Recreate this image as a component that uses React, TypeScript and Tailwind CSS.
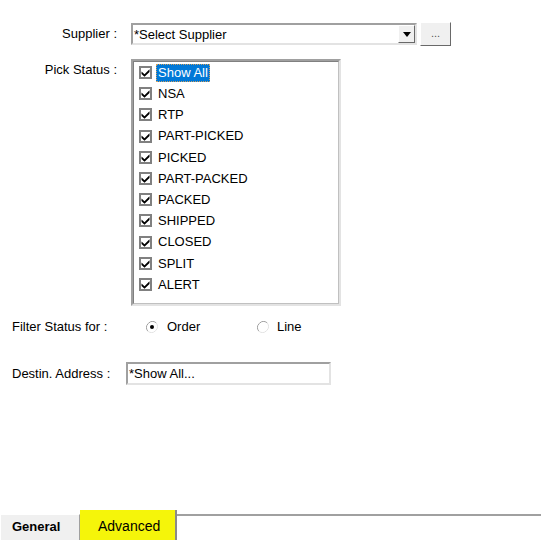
import React from "react";

const items = [
  "Show All",
  "NSA",
  "RTP",
  "PART-PICKED",
  "PICKED",
  "PART-PACKED",
  "PACKED",
  "SHIPPED",
  "CLOSED",
  "SPLIT",
  "ALERT",
];

function Check() {
  return (
    <div className="w-[13px] h-[13px] border-2 border-[#808080] bg-white flex items-center justify-center shrink-0">
      <svg width="9" height="9" viewBox="0 0 9 9">
        <path d="M0.5 3.5 L3.5 6.3 L8.5 1.2 L8.5 4 L3.5 8.8 L0.5 6 Z" fill="#000" />
      </svg>
    </div>
  );
}

function Radio({ on }: { on: boolean }) {
  return (
    <svg width="12" height="12" viewBox="0 0 12 12" className="shrink-0">
      <path d="M10.2 1.8 A6 6 0 0 0 1.8 10.2" fill="none" stroke="#a0a0a0" strokeWidth="1" />
      <path d="M1.8 10.2 A6 6 0 0 0 10.2 1.8" fill="none" stroke="#e3e3e3" strokeWidth="1" />
      <circle cx="6" cy="6" r="4.5" fill="#fff" />
      {on && <circle cx="6" cy="6" r="2" fill="#000" />}
    </svg>
  );
}

export default function App() {
  return (
    <div
      className="w-[541px] h-[540px] bg-white flex flex-col text-[13px] text-black overflow-hidden"
      style={{ fontFamily: '"Liberation Sans", Arial, sans-serif' }}
    >
      {/* Supplier */}
      <div className="flex items-center mt-[22px] h-[24px]">
        <div className="w-[117px] text-right">Supplier :</div>
        <div className="ml-[14px] w-[286px] h-[22px] border-2 border-t-[#a0a0a0] border-l-[#a0a0a0] border-b-[#e3e3e3] border-r-[#e3e3e3] bg-white flex items-center">
          <div className="flex-1 pl-[1px] leading-none">*Select Supplier</div>
          <div className="w-[17px] h-[18px] bg-[#f0f0f0] border border-t-white border-l-white border-b-[#696969] border-r-[#696969] flex items-center justify-center">
            <svg width="8" height="5" viewBox="0 0 8 5">
              <path d="M0 0 H8 L4 5 Z" fill="#000" />
            </svg>
          </div>
        </div>
        <div className="ml-[3px] w-[31px] h-[24px] bg-[#f0f0f0] border border-t-white border-l-white border-b-[#696969] border-r-[#696969] flex items-center justify-center text-[#555] text-[11px] leading-none pb-[2px]">
          ...
        </div>
      </div>

      {/* Pick Status */}
      <div className="flex mt-[13px]">
        <div className="w-[117px] text-right pt-[1px]">Pick Status :</div>
        <div className="ml-[14px] w-[210px] h-[247px] border-2 border-t-[#a0a0a0] border-l-[#a0a0a0] border-b-[#e3e3e3] border-r-[#e3e3e3] bg-white">
          <div className="border border-[#808080] border-b-[#c0c0c0] border-r-[#c0c0c0] h-full pl-[5px]">
            {items.map((it, i) => (
              <div key={it} className="flex items-center h-[21.2px]">
                <Check />
                {i === 0 ? (
                  <span className="ml-[4px] px-[2px] h-[18px] flex items-center bg-[#0078d7] text-white outline-1 outline-dotted outline-[#d0a060] -outline-offset-1">
                    {it}
                  </span>
                ) : (
                  <span className="ml-[6px]">{it}</span>
                )}
              </div>
            ))}
          </div>
        </div>
      </div>

      {/* Filter Status */}
      <div className="flex items-center mt-[13px] h-[16px]">
        <div className="ml-[12px] w-[134px]">Filter Status for :</div>
        <Radio on />
        <span className="ml-[9px] w-[90px]">Order</span>
        <Radio on={false} />
        <span className="ml-[8px]">Line</span>
      </div>

      {/* Destin Address */}
      <div className="flex items-center mt-[27px] h-[23px]">
        <div className="ml-[12px] w-[114px]">Destin. Address :</div>
        <div className="w-[205px] h-[23px] border-2 border-t-[#a0a0a0] border-l-[#a0a0a0] border-b-[#e3e3e3] border-r-[#e3e3e3] bg-white flex items-center pl-[1px] leading-none">
          *Show All...
        </div>
      </div>

      {/* Tabs */}
      <div className="mt-auto flex items-end h-[30px]">
        <div className="w-[80px] h-[26px] bg-[#f0f0f0] border-t border-l border-t-white border-l-white border-r border-r-[#a0a0a0] flex items-center pl-[11px] pb-[2px] font-bold text-[13px]">
          General
        </div>
        <div className="w-[97px] h-[30px] bg-[#f5f50a] border-r-2 border-r-[#8a8a8a] flex items-center pl-[18px] text-[14px] pt-[2px]">
          Advanced
        </div>
        <div className="flex-1 h-[26px] border-t-2 border-t-[#a0a0a0] bg-white"></div>
      </div>
    </div>
  );
}
